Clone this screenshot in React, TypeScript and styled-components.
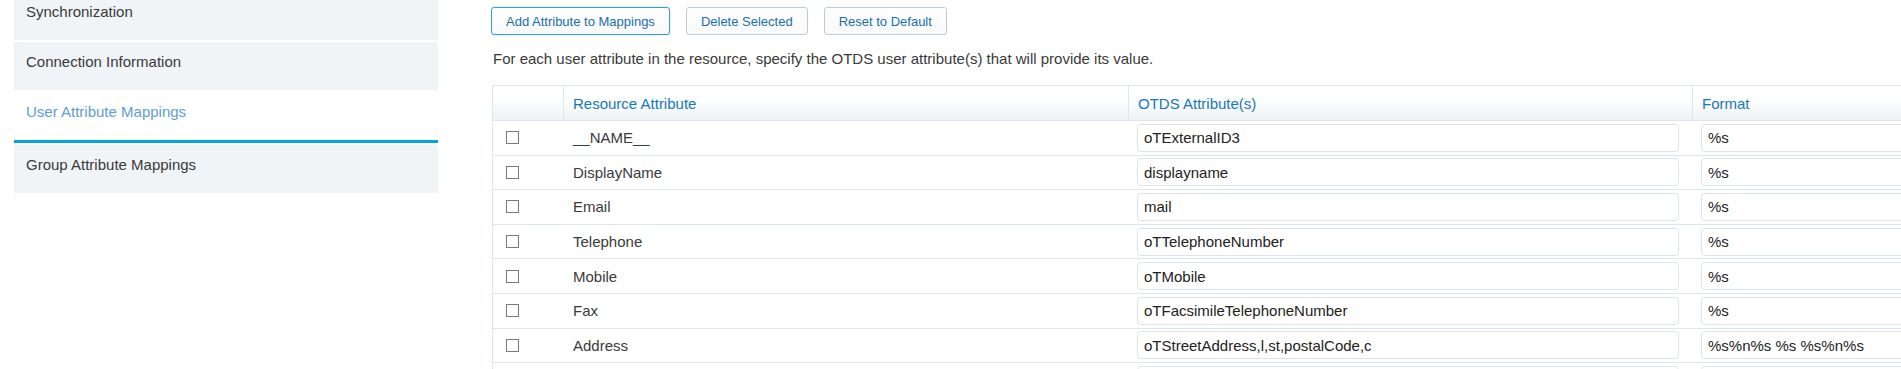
import styled, { createGlobalStyle } from 'styled-components';

const GlobalStyle = createGlobalStyle`
  html, body {
    margin: 0;
    overflow: hidden;
    background: #fff;
  }
  body {
    font-family: "Liberation Sans", Arial, sans-serif;
    color: #333;
  }
`;

const navItems = [
  'Synchronization',
  'Connection Information',
  'User Attribute Mappings',
  'Group Attribute Mappings',
];

const mappings = [
  { name: '__NAME__', otds: 'oTExternalID3', format: '%s' },
  { name: 'DisplayName', otds: 'displayname', format: '%s' },
  { name: 'Email', otds: 'mail', format: '%s' },
  { name: 'Telephone', otds: 'oTTelephoneNumber', format: '%s' },
  { name: 'Mobile', otds: 'oTMobile', format: '%s' },
  { name: 'Fax', otds: 'oTFacsimileTelephoneNumber', format: '%s' },
  { name: 'Address', otds: 'oTStreetAddress,l,st,postalCode,c', format: '%s%n%s %s %s%n%s' },
  // next row only peeks in at the bottom edge
  { name: '', otds: '', format: '' },
];

const App = () => {
  return (
    <>
      <GlobalStyle />
      <Page>
        <Sidebar>
          {navItems.map((item) => (
            <NavItem key={item} $active={item === 'User Attribute Mappings'}>
              {item}
            </NavItem>
          ))}
        </Sidebar>

        <Main>
          <Toolbar>
            <Button $focused>Add Attribute to Mappings</Button>
            <Button>Delete Selected</Button>
            <Button>Reset to Default</Button>
          </Toolbar>
          <Description>
            For each user attribute in the resource, specify the OTDS user attribute(s) that
            will provide its value.
          </Description>

          <Table>
            <HeaderRow>
              <HeaderCell />
              <HeaderCell>Resource Attribute</HeaderCell>
              <HeaderCell>OTDS Attribute(s)</HeaderCell>
              <HeaderCell>Format</HeaderCell>
            </HeaderRow>
            {mappings.map((m, i) => (
              <Row key={i}>
                <CheckCell>
                  <Checkbox type="checkbox" />
                </CheckCell>
                <TextCell>{m.name}</TextCell>
                <InputCell>
                  <TextInput defaultValue={m.otds} />
                </InputCell>
                <InputCell>
                  <TextInput defaultValue={m.format} />
                </InputCell>
              </Row>
            ))}
          </Table>
        </Main>
      </Page>
    </>
  );
};

export default App;

const Page = styled.div`
  display: flex;
  align-items: flex-start;
  margin-top: -8px;
  width: 1901px;
  height: 377px;
  overflow: hidden;
`;

const Sidebar = styled.nav`
  flex: 0 0 424px;
  margin-left: 14px;
  display: flex;
  flex-direction: column;
  gap: 2px;
`;

const NavItem = styled.div<{ $active?: boolean }>`
  height: ${(p) => (p.$active ? '51px' : '48px')};
  padding: 11px 12px 0;
  box-sizing: border-box;
  font-size: 15px;
  line-height: 17px;
  color: ${(p) => (p.$active ? '#5e9dd6' : '#3a3a3a')};
  background: ${(p) => (p.$active ? '#fff' : '#f0f4f7')};
  border-bottom: ${(p) => (p.$active ? '3px solid #00a5dc' : 'none')};
`;

const Main = styled.main`
  flex: 1 1 auto;
  min-width: 0;
  margin-left: 53px;
  padding-top: 15px;
  overflow: hidden;
`;

const Toolbar = styled.div`
  display: flex;
  gap: 16px;
`;

const Button = styled.button<{ $focused?: boolean }>`
  height: 28px;
  padding: 0 14px;
  font-family: inherit;
  font-size: 13px;
  color: #1a6eab;
  background: linear-gradient(#ffffff, #f7f9fb);
  border: 1px solid ${(p) => (p.$focused ? '#3d9bd2' : '#bccbd8')};
  border-radius: 3px;
  box-shadow: ${(p) => (p.$focused ? '0 0 2px rgba(61, 155, 210, 0.45)' : 'none')};
  cursor: pointer;
`;

const Description = styled.p`
  margin: 15px 0 0 2px;
  font-size: 15px;
  line-height: 18px;
  color: #3a3a3a;
  white-space: nowrap;
`;

const Table = styled.div`
  margin-top: 17px;
  margin-left: 1px;
  width: 1765px;
  border-top: 1px solid #dde6ef;
  border-left: 1px solid #dde6ef;
`;

const columns = '71px 565px 564px 564px';

const HeaderRow = styled.div`
  display: grid;
  grid-template-columns: ${columns};
  height: 35px;
  box-sizing: border-box;
  border-bottom: 1px solid #dde6ef;
  background: linear-gradient(#ffffff 35%, #eef2f6);
`;

const HeaderCell = styled.div`
  display: flex;
  align-items: center;
  padding-left: 9px;
  font-size: 15px;
  color: #1679b9;
  border-right: 1px solid #dde6ef;
`;

const Row = styled.div`
  display: grid;
  grid-template-columns: ${columns};
  height: 34.6px;
  box-sizing: border-box;
  border-bottom: 1px solid #dde6ef;
`;

const CheckCell = styled.div`
  display: flex;
  align-items: center;
  padding-left: 13px;
`;

const Checkbox = styled.input`
  appearance: none;
  margin: 0;
  width: 13px;
  height: 13px;
  border: 1px solid #7a7a7a;
  background: #fff;
`;

const TextCell = styled.div`
  display: flex;
  align-items: center;
  padding-left: 9px;
  font-size: 15px;
  color: #3a3a3a;
`;

const InputCell = styled.div`
  display: flex;
  align-items: center;
  padding: 0 14px 0 8px;
`;

const TextInput = styled.input`
  width: 100%;
  height: 28px;
  box-sizing: border-box;
  padding: 0 6px;
  font-family: inherit;
  font-size: 15px;
  color: #222;
  border: 1px solid #dbe3ec;
  border-radius: 4px;
  background: #fff;
  outline: none;
`;
